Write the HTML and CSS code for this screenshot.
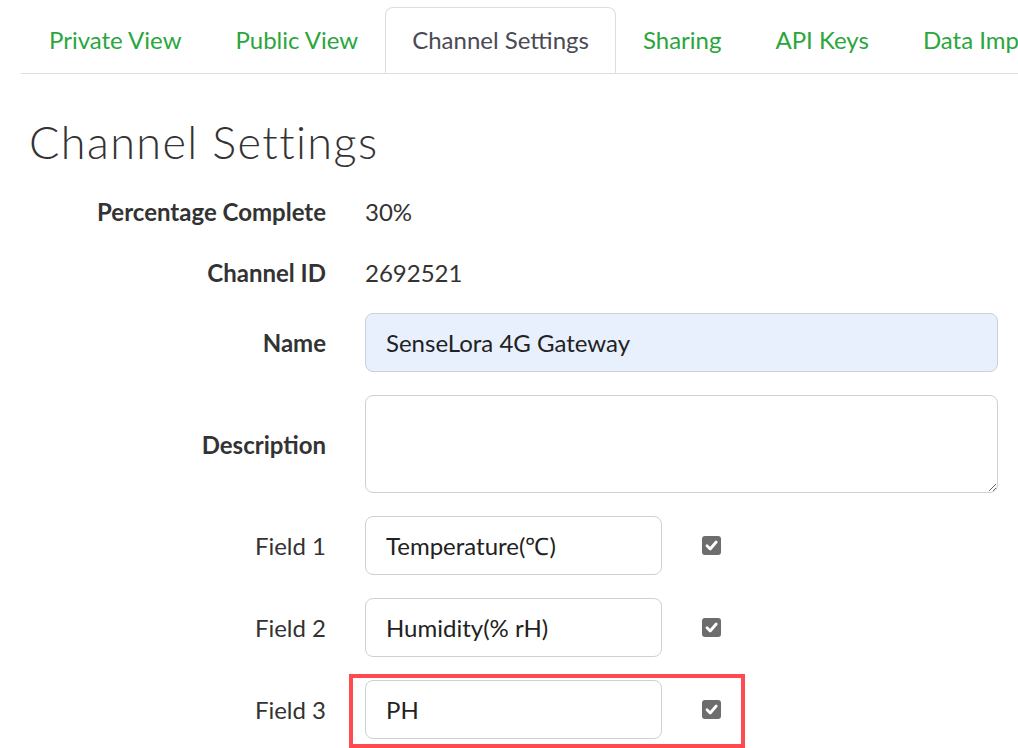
FILE: index.html
```html
<!DOCTYPE html>
<html>
<head>
<meta charset="utf-8">
<link rel="stylesheet" href="styles.css">
</head>
<body>
<div class="page">
  <ul class="tabs">
    <li class="tab">Private View</li>
    <li class="tab">Public View</li>
    <li class="tab active">Channel Settings</li>
    <li class="tab">Sharing</li>
    <li class="tab">API Keys</li>
    <li class="tab">Data Import / Export</li>
  </ul>

  <h1 class="title">Channel Settings</h1>

  <div class="form">
    <div class="row static">
      <div class="label bold">Percentage Complete</div>
      <div class="value">30%</div>
    </div>
    <div class="row static last-static">
      <div class="label bold">Channel ID</div>
      <div class="value">2692521</div>
    </div>
    <div class="row">
      <div class="label bold">Name</div>
      <input class="input wide autofill" type="text" value="SenseLora 4G Gateway">
    </div>
    <div class="row">
      <div class="label bold">Description</div>
      <textarea class="input wide area"></textarea>
    </div>
    <div class="row">
      <div class="label">Field 1</div>
      <input class="input field" type="text" value="Temperature(℃)">
      <span class="check"><svg viewBox="0 0 19 19" width="19" height="19"><path d="M5 9.8 L8.2 13 L14.2 6" fill="none" stroke="#fff" stroke-width="2.8" stroke-linecap="round" stroke-linejoin="round"/></svg></span>
    </div>
    <div class="row">
      <div class="label">Field 2</div>
      <input class="input field" type="text" value="Humidity(% rH)">
      <span class="check"><svg viewBox="0 0 19 19" width="19" height="19"><path d="M5 9.8 L8.2 13 L14.2 6" fill="none" stroke="#fff" stroke-width="2.8" stroke-linecap="round" stroke-linejoin="round"/></svg></span>
    </div>
    <div class="row highlight-row">
      <div class="label">Field 3</div>
      <input class="input field" type="text" value="PH">
      <span class="check"><svg viewBox="0 0 19 19" width="19" height="19"><path d="M5 9.8 L8.2 13 L14.2 6" fill="none" stroke="#fff" stroke-width="2.8" stroke-linecap="round" stroke-linejoin="round"/></svg></span>
      <div class="highlight"></div>
    </div>
  </div>
</div>
</body>
</html>
```

FILE: styles.css
```css
html, body {
  margin: 0;
  padding: 0;
  background: #fff;
  overflow: hidden;
}
body {
  font-family: Lato, "Open Sans", sans-serif;
  color: #333;
  width: 1018px;
  height: 748px;
}
.page {
  padding: 7px 20px 0 21px;
}
.tabs {
  list-style: none;
  margin: 0 -20px 0 0;
  padding: 0 0 0 1px;
  display: flex;
  flex-wrap: nowrap;
  white-space: nowrap;
  border-bottom: 1px solid #dedede;
  overflow: hidden;
  height: 66px;
}
.tab {
  flex: none;
  padding: 0 26px;
  height: 66px;
  line-height: 64px;
  font-size: 24px;
  color: #2aa63d;
  border: 1px solid transparent;
  border-bottom: none;
  box-sizing: border-box;
}
.tab.active {
  color: #4a4a55;
  border-color: #dedede;
  border-radius: 8px 8px 0 0;
  background: #fff;
  height: 67px;
}
.title {
  font-weight: 300;
  font-size: 45px;
  letter-spacing: 1.4px;
  line-height: 56px;
  margin: 40px 0 23px 8px;
  color: #333;
}
.form {
  display: flex;
  flex-direction: column;
}
.row {
  display: flex;
  align-items: center;
  margin-bottom: 23px;
  position: relative;
}
.row.static {
  height: 37px;
  margin-bottom: 24px;
}
.row.last-static {
  margin-bottom: 22px;
}
.label {
  width: 305px;
  flex: none;
  text-align: right;
  font-size: 24px;
  margin-right: 39px;
  color: #333;
}
.label.bold {
  font-weight: 700;
}
.value {
  font-size: 24px;
  color: #333;
}
.input {
  font-family: Lato, "Open Sans", sans-serif;
  font-size: 24px;
  color: #222;
  border: 1px solid #ccd1d8;
  border-radius: 8px;
  box-sizing: border-box;
  padding: 0 20px;
  height: 59px;
  background: #fff;
  outline: none;
  margin: 0;
}
.wide {
  flex: 1;
}
.autofill {
  background: #e8f0fe;
}
.area {
  height: 98px;
  resize: both;
  padding: 10px 20px;
}
.field {
  width: 297px;
  flex: none;
}
.check {
  width: 19px;
  height: 19px;
  border-radius: 3px;
  background: #6d6d6d;
  margin-left: 40px;
  display: block;
}
.check svg {
  display: block;
}
.highlight {
  position: absolute;
  left: 328px;
  top: -6px;
  width: 396px;
  height: 74px;
  border: 4px solid #ff4a50;
  box-sizing: border-box;
}
```
